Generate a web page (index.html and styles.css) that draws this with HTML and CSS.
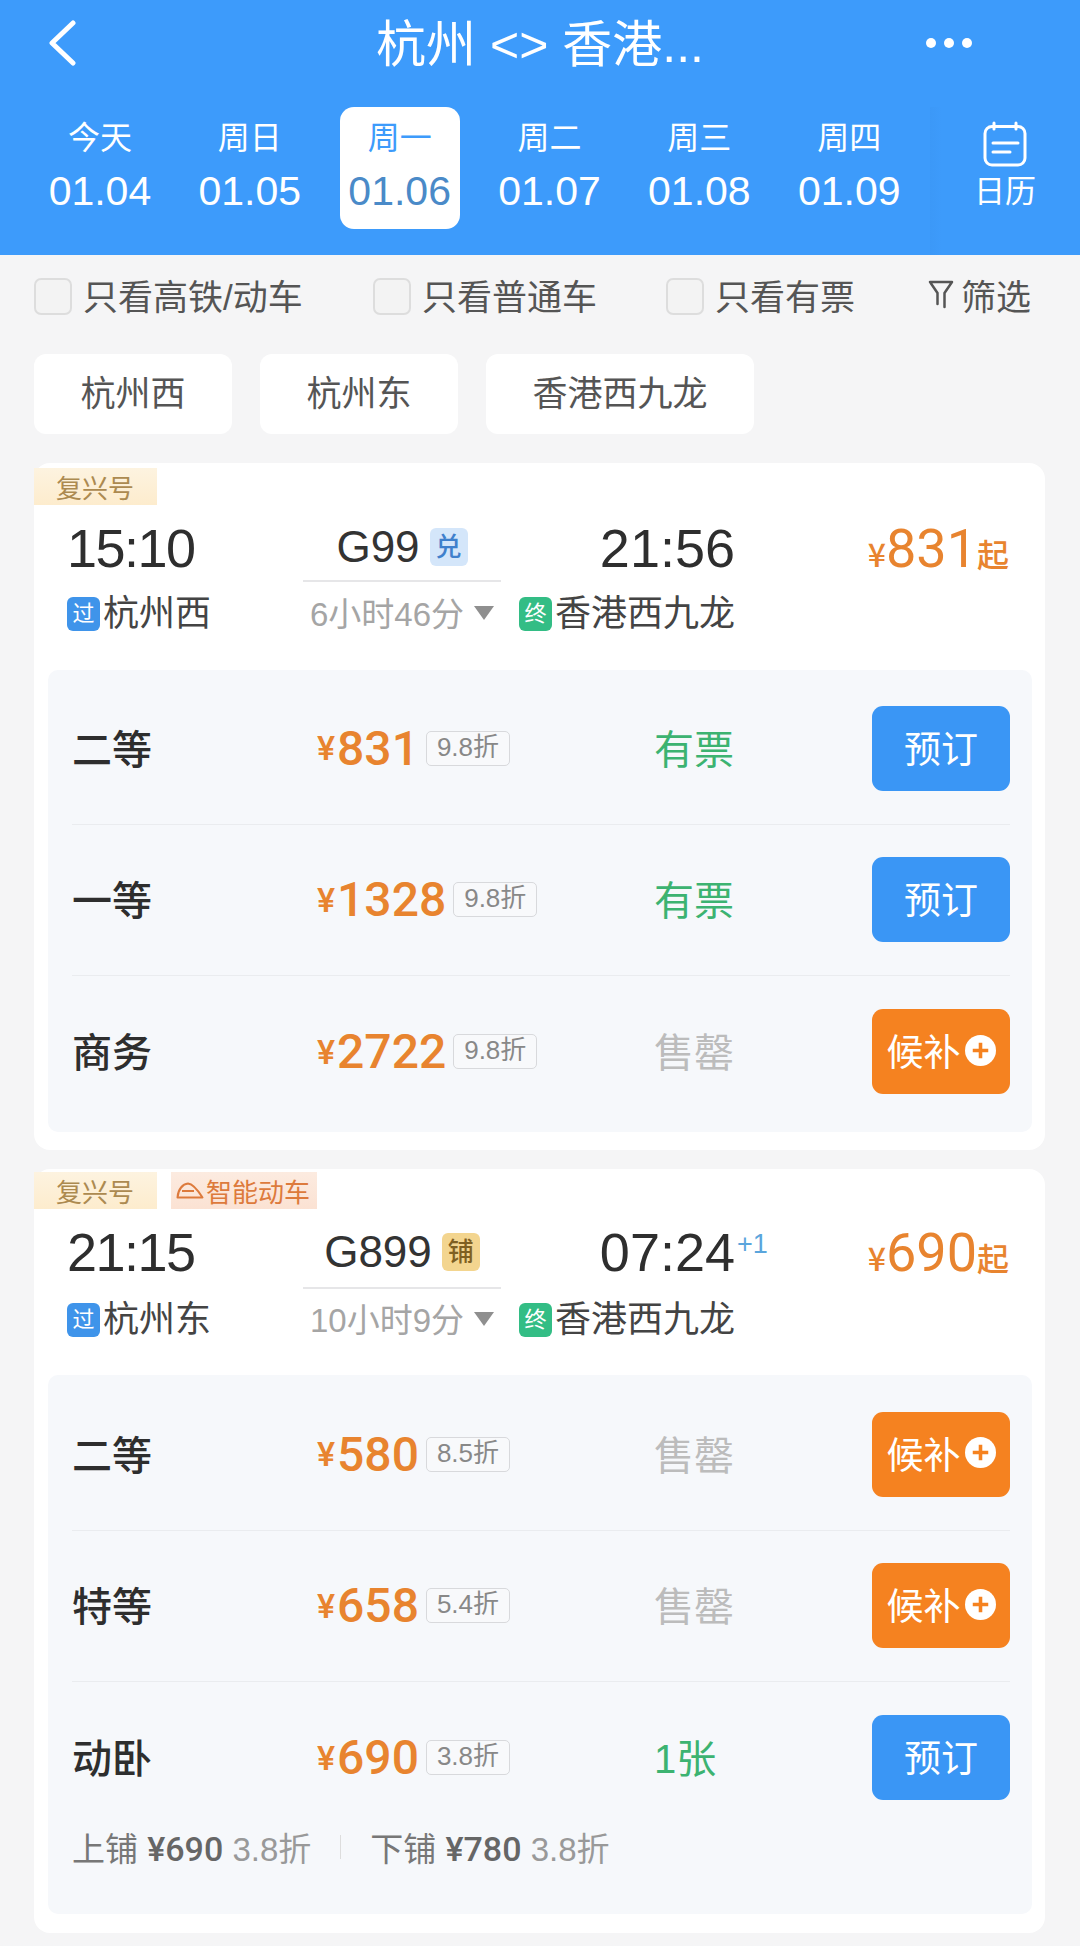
FILE: index.html
```html
<!DOCTYPE html>
<html lang="zh-CN">
<head>
  <meta charset="UTF-8" />
  <meta name="viewport" content="width=device-width, initial-scale=1.0"/>
  <title>杭州 - 香港</title>
  <link rel="stylesheet" href="styles.css">
</head>
<body>

  <header class="top">
    <div class="nav">
      <svg class="back" width="32" height="46" viewBox="0 0 32 46"><path d="M27 3 L6 23 L27 43" fill="none" stroke="#fff" stroke-width="5" stroke-linecap="round" stroke-linejoin="round"/></svg>
      <div class="title">杭州 &lt;&gt; 香港...</div>
      <div class="dots"><i></i><i></i><i></i></div>
    </div>
    <div class="dates">
      <div class="date"><span class="day">今天</span><span class="num">01.04</span></div>
      <div class="date"><span class="day">周日</span><span class="num">01.05</span></div>
      <div class="date on"><span class="day">周一</span><span class="num">01.06</span></div>
      <div class="date"><span class="day">周二</span><span class="num">01.07</span></div>
      <div class="date"><span class="day">周三</span><span class="num">01.08</span></div>
      <div class="date"><span class="day">周四</span><span class="num">01.09</span></div>
      <div class="cal">
        <svg width="44" height="46" viewBox="0 0 44 46"><rect x="2" y="5.500" width="40" height="38.500" rx="7" fill="none" stroke="#fff" stroke-width="3"/><path d="M11 2 V8 M33 2 V8" stroke="#fff" stroke-width="3" stroke-linecap="round"/><path d="M10 22 H35 M10 31 H27" stroke="#fff" stroke-width="3" stroke-linecap="round"/></svg>
        <span>日历</span>
      </div>
    </div>
  </header>

  <div class="filters">
    <label class="check"><i></i>只看高铁/动车</label>
    <label class="check"><i></i>只看普通车</label>
    <label class="check"><i></i>只看有票</label>
    <div class="screen">
      <svg width="26" height="30" viewBox="0 0 26 30"><path d="M2 3 H24 L16.500 14 V28 M2 3 L9.500 14 V25" fill="none" stroke="#555" stroke-width="2.500" stroke-linejoin="round" stroke-linecap="round"/></svg>
      筛选
    </div>
  </div>

  <div class="stations">
    <div class="chip">杭州西</div>
    <div class="chip">杭州东</div>
    <div class="chip">香港西九龙</div>
  </div>

  <section class="card first">
    <div class="tags">
      <span class="tag gold">复兴号</span>
    </div>
    <div class="train">
      <div class="time dep">15:10</div>
      <div class="code">G99<b class="mark blue">兑</b></div>
      <div class="time end">21:56</div>
      <div class="from-price"><small>¥</small>831<small>起</small></div>
      <div class="stop"><b class="pass">过</b>杭州西</div>
      <div class="dur">6小时46分<i></i></div>
      <div class="stop end"><b class="last">终</b>香港西九龙</div>
    </div>
    <div class="seats">
      <div class="seat">
        <div class="name">二等</div>
        <div class="price"><small>¥</small>831<span class="off">9.8折</span></div>
        <div class="left ok">有票</div>
        <div class="btn">预订</div>
      </div>
      <div class="seat">
        <div class="name">一等</div>
        <div class="price"><small>¥</small>1328<span class="off">9.8折</span></div>
        <div class="left ok">有票</div>
        <div class="btn">预订</div>
      </div>
      <div class="seat no-line">
        <div class="name">商务</div>
        <div class="price"><small>¥</small>2722<span class="off">9.8折</span></div>
        <div class="left none">售罄</div>
        <div class="btn wait">候补<svg width="31" height="31" viewBox="0 0 26 26"><circle cx="13" cy="13" r="13" fill="#fff"/><path d="M13 6.500 V19.500 M6.500 13 H19.500" stroke="#f58220" stroke-width="3"/></svg></div>
      </div>
    </div>
  </section>

  <section class="card second">
    <div class="tags">
      <span class="tag gold">复兴号</span>
      <span class="tag red">
        <svg width="28" height="17" viewBox="0 0 28 17"><path d="M1.500 15.500 C2 7 7 2 12 1.500 C18 2 23 10 26.500 15.500 Z" fill="none" stroke="#dd7a3c" stroke-width="2" stroke-linejoin="round"/><path d="M6 9 H18" stroke="#dd7a3c" stroke-width="2"/></svg>智能动车
      </span>
    </div>
    <div class="train">
      <div class="time dep">21:15</div>
      <div class="code">G899<b class="mark gold">铺</b></div>
      <div class="time end">07:24<sup>+1</sup></div>
      <div class="from-price"><small>¥</small>690<small>起</small></div>
      <div class="stop"><b class="pass">过</b>杭州东</div>
      <div class="dur">10小时9分<i></i></div>
      <div class="stop end"><b class="last">终</b>香港西九龙</div>
    </div>
    <div class="seats">
      <div class="seat">
        <div class="name">二等</div>
        <div class="price"><small>¥</small>580<span class="off">8.5折</span></div>
        <div class="left none">售罄</div>
        <div class="btn wait">候补<svg width="31" height="31" viewBox="0 0 26 26"><circle cx="13" cy="13" r="13" fill="#fff"/><path d="M13 6.500 V19.500 M6.500 13 H19.500" stroke="#f58220" stroke-width="3"/></svg></div>
      </div>
      <div class="seat">
        <div class="name">特等</div>
        <div class="price"><small>¥</small>658<span class="off">5.4折</span></div>
        <div class="left none">售罄</div>
        <div class="btn wait">候补<svg width="31" height="31" viewBox="0 0 26 26"><circle cx="13" cy="13" r="13" fill="#fff"/><path d="M13 6.500 V19.500 M6.500 13 H19.500" stroke="#f58220" stroke-width="3"/></svg></div>
      </div>
      <div class="seat no-line">
        <div class="name">动卧</div>
        <div class="price"><small>¥</small>690<span class="off">3.8折</span></div>
        <div class="left ok">1张</div>
        <div class="btn">预订</div>
      </div>
      <div class="berths">
        <span>上铺 <b>¥690</b> <em>3.8折</em></span>
        <i></i>
        <span>下铺 <b>¥780</b> <em>3.8折</em></span>
      </div>
    </div>
  </section>

</body>
</html>
```

FILE: styles.css
```css
* {
  box-sizing: border-box;
}

body {
  margin: 0;
  width: 1080px;
  height: 1946px;
  overflow: hidden;
  background-color: #f5f5f6;
  color: #333;
  font-family: "Liberation Sans", "Noto Sans CJK SC", sans-serif;
}

/* header */
.top {
  height: 255px;
  background-color: #3d9bfb;
  color: #fff;
}

.nav {
  height: 107px;
  padding: 20px 0 0 46px;
  display: flex;
  align-items: flex-start;
}

.title {
  position: absolute;
  left: 0;
  top: 17px;
  width: 1080px;
  text-align: center;
  font-size: 50px;
  line-height: 56px;
}

.dots {
  display: flex;
  gap: 8px;
  margin: 18px 0 0 848px;
}

.dots i {
  width: 10px;
  height: 10px;
  border-radius: 50%;
  background: #fff;
}

.dates {
  display: flex;
  padding-left: 25px;
}

.date {
  width: 120px;
  height: 122px;
  margin: 0 15px;
  padding-top: 14px;
  border-radius: 14px;
  text-align: center;
}

.date.on {
  background: #fff;
  color: #3d9bfb;
}

.date.on .num {
  color: #4a8ac8;
}

.day {
  display: block;
  font-size: 32px;
  line-height: 34px;
}

.num {
  display: block;
  margin: 14px -10px 0;
  font-size: 41px;
  line-height: 44px;
  white-space: nowrap;
}

.cal {
  width: 150px;
  height: 148px;
  padding-top: 14px;
  margin-left: 6px;
  text-align: center;
  font-size: 31px;
  background: linear-gradient(90deg, rgba(40, 110, 190, 0.06), rgba(40, 110, 190, 0) 12px);
}

.cal svg {
  display: block;
  margin: 0 auto 7px;
}

.cal span {
  line-height: 36px;
}

/* filter row */
.filters {
  display: grid;
  grid-template-columns: 339px 293px 262px auto;
  align-items: center;
  height: 78px;
  padding-left: 34px;
  color: #555;
  font-size: 35px;
}

.check {
  display: flex;
  align-items: center;
  gap: 11px;
}

.check i {
  width: 38px;
  height: 37px;
  margin-top: 4px;
  background: #f3f3f3;
  border: 2px solid #ddd;
  border-radius: 7px;
}

.screen {
  display: flex;
  align-items: center;
  gap: 7px;
}

.stations {
  display: flex;
  gap: 28px;
  margin: 21px 0 0 34px;
}

.chip {
  height: 80px;
  padding: 0 46.500px;
  background: #fff;
  border-radius: 12px;
  color: #555;
  font-size: 35px;
  line-height: 80px;
}

/* train cards */
.card {
  width: 1011px;
  margin-left: 34px;
  background: #fff;
  border-radius: 16px;
}

.card.first {
  height: 687px;
  margin-top: 29px;
  padding-top: 5px;
}

.card.second {
  height: 764px;
  margin-top: 19px;
  padding-top: 3px;
}

.tags {
  display: flex;
  gap: 14px;
  height: 37px;
}

.tag {
  display: flex;
  align-items: center;
  height: 37px;
  padding: 0 22px;
  font-size: 26px;
}

.tag.gold {
  width: 123px;
  background: linear-gradient(180deg, #fdf3e0, #fdeccd);
  color: #ac8a50;
}

.tag.red {
  gap: 2px;
  width: 146px;
  padding: 0 5px;
  background: linear-gradient(180deg, #fcebe0, #fbe2d3);
  color: #dd7a3c;
  white-space: nowrap;
}

.train {
  display: grid;
  grid-template-columns: 236px 198px 234px 274px;
  grid-template-rows: 77px 61px;
  padding-left: 33px;
}

.second .train {
  grid-template-rows: 80px 59px;
}

.time {
  font-size: 54px;
  line-height: 87px;
  color: #2e2e2e;
}

.time.dep {
  letter-spacing: -1.500px;
}

.time.end {
  position: relative;
  text-align: right;
}

.time sup {
  position: absolute;
  left: 100%;
  top: 20px;
  margin-left: 2px;
  color: #5aa5dc;
  font-size: 27px;
  line-height: 30px;
}

.code {
  display: flex;
  align-items: center;
  justify-content: center;
  gap: 10px;
  padding-top: 8px;
  border-bottom: 2px solid #e6e6e8;
  font-size: 44px;
  color: #333;
}

.mark {
  width: 38px;
  height: 38px;
  border-radius: 6px;
  font-size: 26px;
  font-weight: 500;
  line-height: 38px;
  text-align: center;
}

.mark.blue {
  background: #d4e6fa;
  color: #3f80cc;
}

.mark.gold {
  background: #f3d58f;
  color: #7f6022;
}

.from-price {
  text-align: right;
  color: #e8842f;
  font-family: Roboto, "Liberation Sans", "Noto Sans CJK SC", sans-serif;
  font-size: 54px;
  font-weight: 400;
  line-height: 87px;
}

.from-price small {
  font-family: "Noto Sans CJK SC", sans-serif;
  font-size: 32px;
  font-weight: 500;
}

.stop {
  display: flex;
  align-items: center;
  gap: 3px;
  color: #444;
  font-size: 36px;
  line-height: 36px;
  padding-top: 2px;
}

.stop.end {
  justify-content: flex-end;
}

.stop b {
  width: 33px;
  height: 34px;
  border-radius: 6px;
  color: #fff;
  font-size: 22px;
  font-weight: 400;
  line-height: 34px;
  text-align: center;
}

.pass {
  background: #3f94ea;
}

.last {
  background: #33bd85;
}

.dur {
  display: flex;
  align-items: center;
  justify-content: center;
  gap: 10px;
  color: #a5a5a5;
  font-size: 33px;
  padding-bottom: 2px;
  white-space: nowrap;
}

.dur i {
  width: 0;
  height: 0;
  margin-top: 3px;
  border-left: 10px solid transparent;
  border-right: 10px solid transparent;
  border-top: 14px solid #8f8f8f;
}

/* seat panel */
.seats {
  width: 984px;
  margin: 27px 0 0 14px;
  padding: 3px 22px 4.500px 24px;
  background: #f6f8fb;
  border-radius: 10px;
}

.second .seats {
  padding-top: 4px;
  padding-bottom: 50.500px;
}

.seat {
  display: grid;
  grid-template-columns: 245px 337px 1fr 138px;
  align-items: center;
  height: 151.500px;
  border-bottom: 1px solid #eaecef;
}

.seat.no-line {
  border-bottom: none;
}

.name {
  padding-bottom: 3px;
  color: #2e2e2e;
  font-size: 40px;
  font-weight: 500;
}

.price {
  display: flex;
  align-items: center;
  color: #e8842f;
  font-family: Roboto, "Liberation Sans", sans-serif;
  font-size: 48px;
  font-weight: 500;
}

.price small {
  margin-right: 2px;
  font-size: 34px;
}

.off {
  height: 35px;
  margin-left: 7px;
  padding: 0 10px;
  background: #f8f9fb;
  border: 1.500px solid #d8d9dc;
  border-radius: 5px;
  color: #888;
  font-family: "Liberation Sans", "Noto Sans CJK SC", sans-serif;
  font-size: 26px;
  font-weight: 400;
  line-height: 31px;
}

.left {
  padding-bottom: 3px;
  font-size: 40px;
}

.left.ok {
  color: #3cb371;
}

.left.none {
  color: #bcbcbc;
}

.btn {
  display: flex;
  align-items: center;
  justify-content: center;
  gap: 4px;
  height: 85px;
  padding-bottom: 3px;
  background: #3a96f5;
  border-radius: 11px;
  color: #fff;
  font-size: 37px;
}

.btn.wait {
  background: #f58220;
}

.berths {
  display: flex;
  align-items: center;
  height: 30px;
  margin-top: -2px;
  margin-bottom: 2px;
  color: #777;
  font-size: 33px;
  white-space: nowrap;
}

.berths b {
  color: #666;
  font-family: Roboto, "Liberation Sans", sans-serif;
  font-size: 34px;
  font-weight: 500;
}

.berths em {
  font-style: normal;
  color: #999;
}

.berths i {
  width: 1px;
  height: 24px;
  margin: 0 29px;
  background: #ddd;
}
```
